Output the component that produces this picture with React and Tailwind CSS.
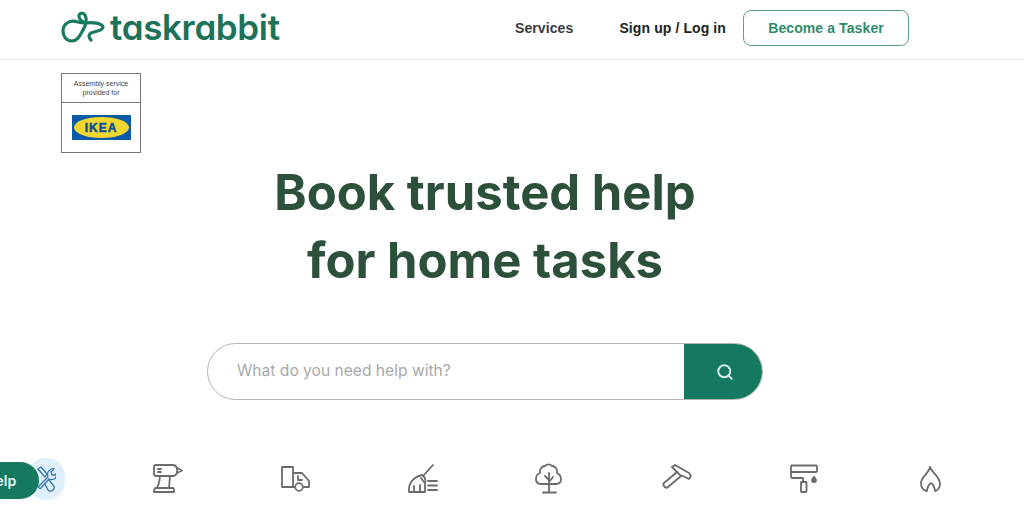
import React from "react";
import { Search } from "lucide-react";

const Ico = ({ vb, children }) => (
  <svg viewBox={vb} width="32" height="32" fill="none" stroke="#6b6b6b" strokeWidth="1.8" strokeLinecap="round" strokeLinejoin="round">
    {children}
  </svg>
);

const icons = [
  <Ico vb="152 462 32 32" key="drill">
    <path d="M156 465h17c2 0 3 1 4 3v5c-1 2-2 3-4 3h-17c-1 0-2-1-2-2v-7c0-1 1-2 2-2z" />
    <path d="M177 468l5 2.500-5 2.500M158 469h3M158 472h3" />
    <path d="M160 476c0 5-1 8-3 12M170 476l-1 12" />
    <path d="M156 488h17c1 0 1 1 1 4h-20c0-3 1-4 2-4z" />
  </Ico>,
  <Ico vb="279 462 32 32" key="truck">
    <path d="M294 487h-12v-20h11v20M293 473h9l7 8v6h-5" />
    <path d="M298 476v4h4" />
    <circle cx="299" cy="487" r="3.800" />
  </Ico>,
  <Ico vb="406 462 32 32" key="broom">
    <path d="M433 465l-10 11" />
    <path d="M409 492c-1-8 4-15 13-17 3 2 4 5 3 8l0 9z" />
    <path d="M414 492v-6M420 492v-7M421 478l3 4" />
    <path d="M428 481h9M428 485.500h9M428 490h9" />
  </Ico>,
  <Ico vb="533 462 32 32" key="tree">
    <path d="M549 484h7c3 0 5-2 5-5 0-3-2-5-4-6 1-4-2-7-5-7-2-2-5-2-7 0-3 0-6 3-5 7-3 1-4 3-4 6 0 3 2 5 5 5z" />
    <path d="M549 473v19M549 480l-4-4M549 482l4-5M543 492.500h13" />
  </Ico>,
  <Ico vb="660 462 32 32" key="hammer">
    <path d="M672 467l3-2 14 8 2 3-2 3-6-3-3-1-3-3z" />
    <path d="M677 472l-13 11c-1 1-1 2 0 3l1 1c1 1 2 1 3 0l13-11" />
  </Ico>,
  <Ico vb="787 462 32 32" key="roller">
    <rect x="791" y="465.500" width="26" height="6.500" rx="1" />
    <path d="M791 472v5c0 1 1 1 2 1h10v4" />
    <rect x="801" y="482" width="5.500" height="10" rx="0.500" />
    <path d="M814 477c1 1 2 2 2 3a2 2 0 0 1-4 0c0-1 1-2 2-3z" fill="#6b6b6b" />
  </Ico>,
  <Ico vb="914 462 32 32" key="flame">
    <path d="M930 467C931 472 940 476 940 484 940 488 937 491 935 491 935 488 933 484 931 483 929 484 927 488 927 491 924 491 921 488 921 483 921 477 929 473 930 467z" />
  </Ico>,
];

export default function App() {
  return (
    <div className="relative h-[512px] w-[1024px] overflow-hidden bg-white font-['Inter',sans-serif]">
      <header className="flex h-[60px] items-center border-b border-[#ececec] pb-[4px] pl-[61px] pr-[115px]">
        <div className="flex items-center">
          <svg width="44" height="34" viewBox="61 12 44 34" fill="none" stroke="#1a7a60" strokeWidth="3.2" strokeLinecap="round" strokeLinejoin="round">
            <path d="M83 31C80 36 78 42 72 42 66 42 63 37 63 32 63 25 70 20 78 23 81 24 83 24 86 24 92 23 102 24 103 28 103 32 95 32 91 34 88 36 89 39 91 41" />
            <path d="M83 31C86 26 87 20 85 16 83 13 79 14 79 17 79 20 82 23 86 24" />
          </svg>
          <span className="ml-[5px] text-[35px] font-semibold leading-none tracking-[-0.35px] text-[#1d7259] [font-feature-settings:'cv11']">taskrabbit</span>
        </div>
        <nav className="ml-auto flex items-center font-['Liberation_Sans',sans-serif] text-sm font-bold tracking-[0.1px]">
          <a className="text-[#3a3a3a]">Services</a>
          <a className="ml-[46px] text-[#222222]">Sign up / Log in</a>
          <a className="ml-[17px] flex h-9 w-[166px] items-center justify-center rounded-lg border border-[#5a9f8a] text-[#2f8a6c]">Become a Tasker</a>
        </nav>
      </header>

      <main className="ml-[61px] w-[848px] pt-[13px]">
        <div className="flex h-20 w-20 flex-col border-[1.5px] border-[#777777]">
          <div className="flex h-[29px] items-center justify-center border-b-[1.5px] border-[#777777] text-center font-['Liberation_Sans',sans-serif] text-[7px] leading-[9px] text-[#444444]">
            Assembly service<br />provided for
          </div>
          <div className="flex flex-1 items-center justify-center">
            <div className="flex h-[25px] w-[59px] items-center justify-center bg-[#0a5aa8]">
              <div className="flex h-[21px] w-[55px] items-center justify-center rounded-[50%] bg-[#f2d630]">
                <span className="font-['Liberation_Sans',sans-serif] text-[12px] font-bold leading-none tracking-[1px] text-[#0a4f9c] [-webkit-text-stroke:0.5px_#0a4f9c]">IKEA</span>
              </div>
            </div>
          </div>
        </div>

        <h1 className="mt-[6px] text-center text-[49px] font-bold leading-[68px] text-[#2c5039]">
          Book trusted help<br />for home tasks
        </h1>

        <div className="mx-auto mt-[48px] flex h-[57px] w-[556px] overflow-hidden rounded-full border border-[#b5b5b5]">
          <div className="flex flex-1 items-center pb-[1px] pl-[29px] text-[15.6px] text-[#a9a9a9]">What do you need help with?</div>
          <button className="-m-px flex w-[79px] items-center justify-center bg-[#14795f]">
            <Search size={18} strokeWidth={2.6} className="ml-[2px] text-[#d8efe8]" />
          </button>
        </div>
      </main>

      <div className="mt-[62px] flex gap-[95px] pl-[152px]">{icons}</div>

      <div className="absolute left-[28px] top-[458px] h-[42px] w-[37px] rounded-[45%] bg-[#dff0fb]" />
      <div className="absolute left-[-18px] top-[462px] flex h-[37px] w-[57px] items-center rounded-r-[19px] bg-[#14795f] pl-[3px] text-sm font-semibold text-[#e6f4ef]">
        Help
      </div>
      <svg className="absolute left-[36px] top-[463px]" width="20" height="30" viewBox="36 463 20 30" fill="none" stroke="#3576ac" strokeWidth="1.300" strokeLinecap="round" strokeLinejoin="round">
        <path d="M39 486l9-9c-1-3 0-6 2-7 1-1 3-2 4-1l-3 3 1 3 3 0 2-2c0 3-1 5-3 6-2 1-3 1-5 0l-8 9c-1 1-3 0-2-2z" />
        <path d="M38 469l3-2 6 7-2 3-7-8zM49 480l4 5c2 2 1 4 0 5-2 2-4 1-5 0l-3-6" />
      </svg>
    </div>
  );
}
